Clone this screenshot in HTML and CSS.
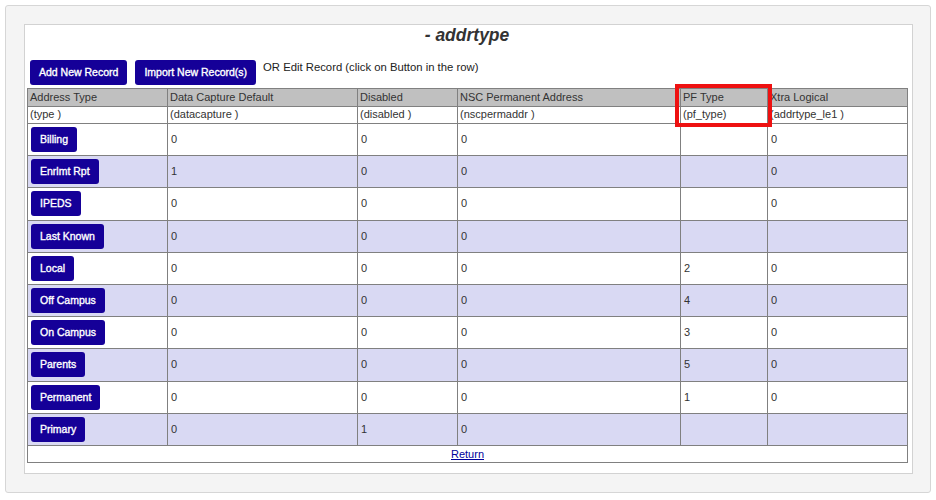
FILE: index.html
```html
<!DOCTYPE html>
<html>
<head>
<meta charset="utf-8">
<link rel="stylesheet" href="styles.css">
</head>
<body>
<div class="panel">
  <div class="box">
    <h1 class="title">- addrtype</h1>
    <div class="actions">
      <button class="btn">Add New Record</button>
      <button class="btn">Import New Record(s)</button>
      <span class="hint">OR Edit Record (click on Button in the row)</span>
    </div>
    <div class="table-wrap">
      <table class="grid">
        <colgroup>
          <col class="c1"><col class="c2"><col class="c3"><col class="c4"><col class="c5"><col class="c6">
        </colgroup>
        <thead>
          <tr class="head">
            <th>Address Type</th><th>Data Capture Default</th><th>Disabled</th><th>NSC Permanent Address</th><th>PF Type</th><th>Xtra Logical</th>
          </tr>
          <tr class="sub">
            <td>(type )</td><td>(datacapture )</td><td>(disabled )</td><td>(nscpermaddr )</td><td>(pf_type)</td><td>(addrtype_le1 )</td>
          </tr>
        </thead>
        <tbody>
          <tr class="row"><td><button class="btn">Billing</button></td><td>0</td><td>0</td><td>0</td><td></td><td>0</td></tr>
          <tr class="row alt"><td><button class="btn">Enrlmt Rpt</button></td><td>1</td><td>0</td><td>0</td><td></td><td>0</td></tr>
          <tr class="row"><td><button class="btn">IPEDS</button></td><td>0</td><td>0</td><td>0</td><td></td><td>0</td></tr>
          <tr class="row alt"><td><button class="btn">Last Known</button></td><td>0</td><td>0</td><td>0</td><td></td><td></td></tr>
          <tr class="row"><td><button class="btn">Local</button></td><td>0</td><td>0</td><td>0</td><td>2</td><td>0</td></tr>
          <tr class="row alt"><td><button class="btn">Off Campus</button></td><td>0</td><td>0</td><td>0</td><td>4</td><td>0</td></tr>
          <tr class="row"><td><button class="btn">On Campus</button></td><td>0</td><td>0</td><td>0</td><td>3</td><td>0</td></tr>
          <tr class="row alt"><td><button class="btn">Parents</button></td><td>0</td><td>0</td><td>0</td><td>5</td><td>0</td></tr>
          <tr class="row"><td><button class="btn">Permanent</button></td><td>0</td><td>0</td><td>0</td><td>1</td><td>0</td></tr>
          <tr class="row alt"><td><button class="btn">Primary</button></td><td>0</td><td>1</td><td>0</td><td></td><td></td></tr>
          <tr class="foot"><td colspan="6"><a href="#" class="return">Return</a></td></tr>
        </tbody>
      </table>
      <div class="highlight"></div>
    </div>
  </div>
</div>
</body>
</html>
```
FILE: styles.css
```css
html, body {
  margin: 0;
  padding: 0;
  background: #ffffff;
}
body {
  padding: 5px;
  font-family: "Liberation Sans", Arial, sans-serif;
  color: #333333;
}
.panel {
  box-sizing: border-box;
  width: 926px;
  height: 488px;
  background: #f4f4f4;
  border: 1px solid #d6d6d6;
  border-radius: 3px;
  padding: 18px 17px 18px 18px;
}
.box {
  background: #ffffff;
  border: 1px solid #d2d2d2;
  padding: 0 5px 10px 2px;
}
.title {
  margin: 0;
  font-size: 17.5px;
  line-height: 20px;
  font-weight: bold;
  font-style: italic;
  text-align: center;
  color: #333333;
}
.actions {
  display: flex;
  align-items: flex-start;
  margin-top: 15px;
  padding-left: 3px;
  gap: 8px;
}
.btn {
  box-sizing: border-box;
  height: 25px;
  padding: 0 9px;
  border: none;
  border-radius: 3px;
  background: #150098;
  color: #ffffff;
  font-family: "Liberation Sans", Arial, sans-serif;
  font-size: 10.5px;
  font-weight: normal;
  -webkit-text-stroke: 0.35px #ffffff;
  line-height: 25px;
  white-space: nowrap;
  display: block;
}
.hint {
  font-size: 11.3px;
  line-height: 13px;
  margin-left: -1px;
  margin-top: 1px;
  color: #222222;
}
.table-wrap {
  position: relative;
  margin-top: 3px;
}
.grid {
  width: 880px;
  border-collapse: collapse;
  table-layout: fixed;
  border: 1px solid #808080;
  font-size: 11px;
}
.c1 { width: 140px; }
.c2 { width: 190px; }
.c3 { width: 100px; }
.c4 { width: 223px; }
.c5 { width: 87px; }
.c6 { width: 140px; }
.grid th, .grid td {
  border: 1px solid #808080;
  text-align: left;
  font-weight: normal;
  line-height: 13px;
  vertical-align: middle;
  color: #333333;
}
.head th {
  background: #c0c0c0;
  padding: 2px 2px 2px 2px;
}
.sub td {
  background: #ffffff;
  padding: 1px 2px 2px 2px;
}
.row td {
  padding: 3px 3px 3.2px 3px;
  height: 25px;
}
.row.alt td {
  background: #d9d9f3;
}
.foot td {
  text-align: center;
  padding: 2px 2px 1px;
}
.return {
  color: #00009c;
  text-decoration: underline;
}
.highlight {
  position: absolute;
  box-sizing: border-box;
  left: 648px;
  top: -4px;
  width: 97px;
  height: 43px;
  border: 4px solid #ee1111;
  pointer-events: none;
}
```
